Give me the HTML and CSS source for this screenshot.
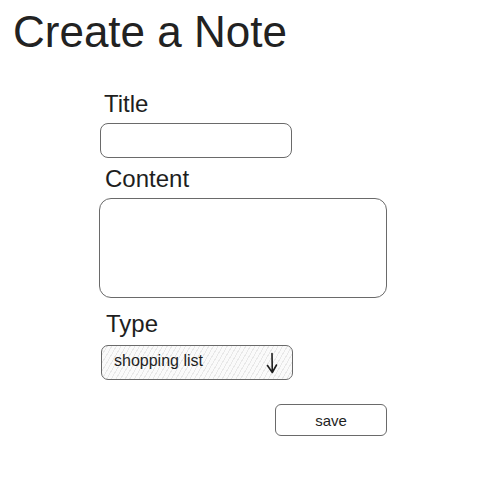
FILE: index.html
```html
<!DOCTYPE html>
<html>
<head>
<meta charset="utf-8">
<link rel="stylesheet" href="styles.css">
</head>
<body>
<h1 class="heading">Create a Note</h1>
<form class="form">
  <label class="label label-title">Title</label>
  <div class="field field-title"></div>
  <label class="label label-content">Content</label>
  <div class="field field-content"></div>
  <label class="label label-type">Type</label>
  <div class="select">
    <span class="select-text">shopping list</span>
    <svg class="arrow" width="12" height="22" viewBox="0 0 12 22"><path d="M6 1.5 L6.3 20 M1.5 13.5 L6.3 20.5 L10.5 13" fill="none" stroke="#1e1e1e" stroke-width="1.6" stroke-linecap="round" stroke-linejoin="round"/></svg>
  </div>
  <div class="actions">
    <div class="button">save</div>
  </div>
</form>
</body>
</html>
```
FILE: styles.css
```css
html, body {
  margin: 0;
  padding: 0;
  background: #ffffff;
}
body {
  font-family: "Liberation Sans", Arial, sans-serif;
  color: #1e1e1e;
  width: 496px;
  height: 496px;
  overflow: hidden;
}
.heading {
  margin: 0;
  padding: 10px 0 0 13px;
  font-size: 44px;
  line-height: 44px;
  font-weight: normal;
  color: #222;
}
.form {
  display: flex;
  flex-direction: column;
  align-items: flex-start;
  width: 288px;
  margin: 36px 0 0 99px;
}
.label {
  font-size: 24px;
  line-height: 28px;
  padding-left: 5px;
  color: #1e1e1e;
}
.label-title { margin-bottom: 5px; }
.label-content { margin-top: 7px; margin-bottom: 5px; padding-left: 6px; }
.label-type { margin-top: 12px; margin-bottom: 7px; padding-left: 7px; }
.field {
  box-sizing: border-box;
  border: 1px solid #6a6a6a;
  background: #fff;
}
.field-title {
  width: 192px;
  height: 35px;
  margin-left: 1px;
  border-radius: 8px;
}
.field-content {
  width: 288px;
  height: 100px;
  border-radius: 12px;
}
.select {
  box-sizing: border-box;
  width: 192px;
  height: 35px;
  margin-left: 2px;
  border: 1px solid #6a6a6a;
  border-radius: 7px;
  display: flex;
  align-items: center;
  justify-content: space-between;
  padding: 0 14px 0 12px;
  background-color: #fafafa;
  background-image: repeating-linear-gradient(-60deg, #e8e8e8 0 1px, transparent 1px 4px);
}
.select-text {
  font-size: 16px;
  color: #1e1e1e;
  padding-bottom: 3px;
}
.arrow { display: block; }
.actions {
  display: flex;
  justify-content: flex-end;
  width: 288px;
  margin-top: 24px;
}
.button {
  box-sizing: border-box;
  width: 112px;
  height: 32px;
  border: 1px solid #6a6a6a;
  border-radius: 6px;
  display: flex;
  align-items: center;
  justify-content: center;
  font-size: 15px;
  color: #1e1e1e;
}
```
